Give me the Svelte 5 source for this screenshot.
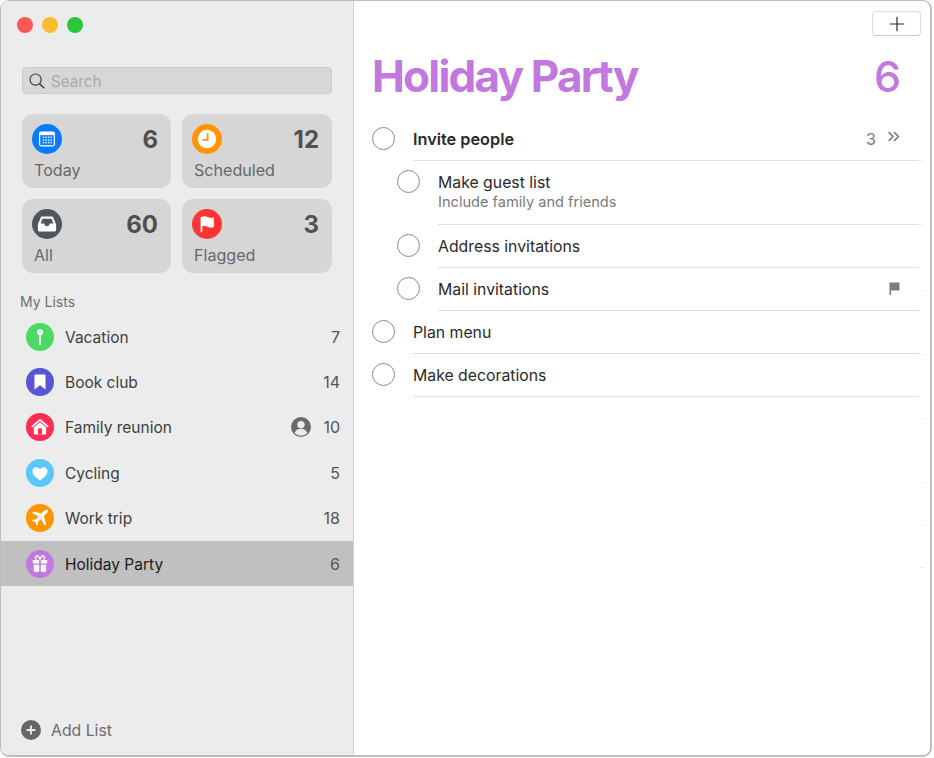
<script lang="ts">
	const smart = [
		{ label: 'Today', count: 6, color: '#0a7aff', icon: 'today' },
		{ label: 'Scheduled', count: 12, color: '#ff9500', icon: 'clock' },
		{ label: 'All', count: 60, color: '#50565e', icon: 'tray' },
		{ label: 'Flagged', count: 3, color: '#ff3433', icon: 'flag' }
	];

	const lists = [
		{ name: 'Vacation', count: 7, color: '#4cd964', icon: 'pin' },
		{ name: 'Book club', count: 14, color: '#5856d6', icon: 'bookmark' },
		{ name: 'Family reunion', count: 10, color: '#ff2d55', icon: 'house', shared: true },
		{ name: 'Cycling', count: 5, color: '#5ac8fa', icon: 'heart' },
		{ name: 'Work trip', count: 18, color: '#ff9500', icon: 'plane' },
		{ name: 'Holiday Party', count: 6, color: '#c278de', icon: 'gift', selected: true }
	];

	const todos = [
		{ title: 'Invite people', bold: true, subtasks: 3 },
		{ title: 'Make guest list', note: 'Include family and friends', child: true },
		{ title: 'Address invitations', child: true },
		{ title: 'Mail invitations', child: true, flagged: true },
		{ title: 'Plan menu' },
		{ title: 'Make decorations' }
	];

	// faint marks along the right edge of the list
	const ticks = [160, 224, 289, 353, 417, 481, 524, 566];
</script>

{#snippet glyph(name: string)}
	<svg viewBox="0 0 28 28" class="glyph" aria-hidden="true">
		{#if name === 'today'}
			<rect x="6.5" y="7" width="15" height="14" rx="2" fill="#fff" />
			<rect x="7.7" y="10.4" width="12.6" height="9.4" fill="#0a7aff" />
			<g fill="#cfe4ff">
				{#each [0, 1, 2] as r}
					{#each [0, 1, 2, 3] as c}
						<rect x={10 + c * 2.4} y={11.6 + r * 2.5} width="1.5" height="1.5" />
					{/each}
				{/each}
			</g>
		{:else if name === 'clock'}
			<circle cx="14" cy="14" r="8.6" fill="#fff" />
			<path d="M14.6 8.6v6.2H9.8" fill="none" stroke="#ff9500" stroke-width="1.7" />
		{:else if name === 'tray'}
			<path d="M8.6 7h10.8l3.1 7.2v5.3a1.5 1.5 0 0 1-1.5 1.5H7a1.5 1.5 0 0 1-1.5-1.5v-5.3z" fill="#fff" />
			<path d="M8 13.6l1.8-4.6h8.4l1.8 4.6h-3.4c-.4 1.6-1.3 2.4-2.6 2.4s-2.2-.8-2.6-2.4z" fill="#50565e" />
		{:else if name === 'flag'}
			<path d="M8 7.6c3-1.4 5.4-.7 7 0s3.200 .9 5.400 .1v9.100c-2.200 .8-3.900 .6-5.400-.1s-3.800-1.200-5.400-.4v5.300H8z" fill="#fff" />
		{:else if name === 'pin'}
			<circle cx="14" cy="9.300" r="3" fill="#fff" />
			<circle cx="14" cy="8.800" r=".8" fill="#4cd964" />
			<rect x="13.100" y="11" width="1.800" height="11" rx=".9" fill="#fff" />
		{:else if name === 'bookmark'}
			<path d="M9.300 6.500h9.400a.8 .8 0 0 1 .8 .8v14.200L14 17.200l-5.500 4.300V7.300a.8 .8 0 0 1 .8-.8z" fill="#fff" />
		{:else if name === 'house'}
			<path d="M14 5.800l8.800 7.400-1 1.200L14 7.900l-7.800 6.500-1-1.200z" fill="#fff" />
			<path d="M7.800 14.300L14 9.200l6.200 5.100v6.200a1 1 0 0 1-1 1H8.800a1 1 0 0 1-1-1z" fill="#fff" />
			<rect x="12" y="15.400" width="4" height="6" fill="#ff2d55" />
		{:else if name === 'heart'}
			<path d="M14 21.500C9.500 18.300 6.500 15.500 6.500 12.300c0-2.400 1.800-4 3.800-4 1.600 0 2.900 .8 3.700 2.200.8-1.400 2.100-2.200 3.700-2.200 2 0 3.800 1.600 3.800 4 0 3.200-3 6-7.500 9.200z" fill="#fff" />
		{:else if name === 'plane'}
			<path d="M21.800 6.200c-.9-.9-2.300-.6-3.300 .4l-3 3-8.200-2.200-1.400 1.400 6.700 3.700-3.200 3.300-2.500-.4-1.100 1.100 3.400 1.800 1.800 3.400 1.100-1.100-.4-2.500 3.300-3.200 3.700 6.700 1.400-1.400-2.200-8.200 3-3c1-1 1.300-2.400 .9-3z" fill="#fff" />
		{:else if name === 'gift'}
			<path d="M10.600 9.600c-1.800-.9-1.600-3.400 .2-3.600 1.500-.2 2.700 1.500 3.200 3.600.5-2.100 1.700-3.800 3.200-3.600 1.800 .2 2 2.700 .2 3.600" fill="none" stroke="#fff" stroke-width="1.300" />
			<path d="M6.800 10h6.400v3.600H6.800zM14.800 10h6.400v3.600h-6.400zM7.800 14.800h5.400v6.900H9a1.200 1.200 0 0 1-1.200-1.200zM14.800 14.800h5.400v5.700a1.200 1.200 0 0 1-1.200 1.200h-4.200z" fill="#fff" />
		{/if}
	</svg>
{/snippet}

<div class="window">
	<aside class="sidebar">
		<div class="traffic">
			<span class="close"></span>
			<span class="min"></span>
			<span class="max"></span>
		</div>

		<div class="search">
			<svg viewBox="0 0 18 18" width="18" height="18" aria-hidden="true">
				<circle cx="7.600" cy="7.600" r="5.600" fill="none" stroke="#3c3c3c" stroke-width="1.200" />
				<path d="M11.700 11.700l4.500 4.500" stroke="#3c3c3c" stroke-width="1.500" />
			</svg>
			<span>Search</span>
		</div>

		<div class="smart">
			{#each smart as s}
				<div class="card">
					<div class="card-top">
						<span class="dot" style:background={s.color}>{@render glyph(s.icon)}</span>
						<span class="card-count">{s.count}</span>
					</div>
					<div class="card-label">{s.label}</div>
				</div>
			{/each}
		</div>

		<h2>My Lists</h2>
		<ul class="lists">
			{#each lists as l}
				<li class:selected={l.selected}>
					<span class="dot small" style:background={l.color}>{@render glyph(l.icon)}</span>
					<span class="name">{l.name}</span>
					{#if l.shared}
						<svg class="shared" viewBox="0 0 20 20" aria-hidden="true">
							<circle cx="10" cy="10" r="10" fill="#6a6a6a" />
							<circle cx="10" cy="7.600" r="3.700" fill="#ececec" />
							<path d="M3.600 16c1-2.900 3.500-4.300 6.400-4.300s5.400 1.400 6.400 4.300a9 9 0 0 1-12.800 0z" fill="#ececec" />
						</svg>
					{/if}
					<span class="count">{l.count}</span>
				</li>
			{/each}
		</ul>

		<div class="add-list">
			<svg viewBox="0 0 20 20" width="20" height="20" aria-hidden="true">
				<circle cx="10" cy="10" r="10" fill="#666" />
				<path d="M10 5.500v9M5.500 10h9" stroke="#ececec" stroke-width="1.800" />
			</svg>
			<span>Add List</span>
		</div>
	</aside>

	<main class="content">
		<div class="toolbar">
			<button class="add" aria-label="Add reminder">
				<svg viewBox="0 0 16 16" width="16" height="16" aria-hidden="true">
					<path d="M8 .8v14.400M.8 8h14.400" stroke="#2a2a2a" stroke-width="1.200" />
				</svg>
			</button>
		</div>

		<header class="heading">
			<h1>Holiday Party</h1>
			<span class="total">6</span>
		</header>

		<div class="todos">
			{#each todos as t}
				<div class="todo" class:child={t.child}>
					<span class="check"></span>
					<div class="body">
						<div class="text">
							<div class="title" class:bold={t.bold}>{t.title}</div>
							{#if t.note}<div class="note">{t.note}</div>{/if}
						</div>
						{#if t.subtasks}
							<span class="sub">{t.subtasks}</span>
							<svg class="chev" viewBox="0 0 12 10" aria-hidden="true">
								<path d="M1.500 1l4 4-4 4M6.500 1l4 4-4 4" fill="none" stroke="#7c7c7c" stroke-width="1.500" />
							</svg>
						{/if}
						{#if t.flagged}
							<svg class="flag" viewBox="0 0 11 13" aria-hidden="true">
								<path d="M.5 .5h10v8H2v4.500H.5z" fill="#7d7d7d" />
							</svg>
						{/if}
					</div>
				</div>
			{/each}
		</div>

		{#each ticks as y}
			<span class="tick" style:top="{y}px"></span>
		{/each}
	</main>
</div>

<style>
	:global(body) {
		background: #fff;
	}
	.window {
		box-sizing: border-box;
		display: flex;
		width: 932px;
		height: 757px;
		border: 1px solid #bdbdbd;
		border-bottom-width: 2px;
		border-right-width: 2px;
		border-radius: 9px;
		overflow: hidden;
		font-family: Inter, 'Liberation Sans', sans-serif;
		background: #fff;
	}
	.sidebar {
		box-sizing: border-box;
		display: flex;
		flex-direction: column;
		width: 353px;
		flex: none;
		background: #ececec;
		border-right: 1px solid #d4d4d4;
	}
	.traffic {
		display: flex;
		gap: 9px;
		padding: 16px 0 0 16px;
	}
	.traffic span {
		width: 16px;
		height: 16px;
		border-radius: 50%;
	}
	.close {
		background: #fc5753;
	}
	.min {
		background: #fdbc2e;
	}
	.max {
		background: #2ac73e;
	}
	.search {
		box-sizing: border-box;
		display: flex;
		align-items: center;
		gap: 5px;
		height: 27px;
		margin: 34px 21px 0;
		padding: 0 5px;
		background: #d7d7d7;
		border: 1px solid #cbcbcb;
		border-radius: 4px;
		font-size: 15.200px;
		color: #a9a9a9;
	}
	.search span {
		padding-top: 1px;
	}
	.smart {
		display: grid;
		grid-template-columns: 149px 150px;
		grid-auto-rows: 74px;
		gap: 11px;
		margin: 20px 0 0 21px;
	}
	.card {
		box-sizing: border-box;
		padding: 10px 13px 0 9.500px;
		background: #d6d6d6;
		border-radius: 11px;
	}
	.card-top {
		display: flex;
		align-items: center;
		justify-content: space-between;
	}
	.dot {
		display: flex;
		flex: none;
		width: 30px;
		height: 30px;
		border-radius: 50%;
	}
	.dot.small {
		width: 28px;
		height: 28px;
	}
	.glyph {
		width: 100%;
		height: 100%;
	}
	.card-count {
		font-size: 24px;
		font-weight: 700;
		color: #505050;
	}
	.card-label {
		margin: 6px 0 0 2.500px;
		font-size: 16.100px;
		line-height: 20px;
		color: #686868;
	}
	h2 {
		margin: 20px 0 0 19px;
		font-size: 14px;
		line-height: 17px;
		font-weight: 400;
		color: #6e6e6e;
	}
	.lists {
		margin: 4px 0 0;
		padding: 0;
		list-style: none;
	}
	.lists li {
		display: flex;
		align-items: center;
		height: 45.400px;
		padding: 0 13px 0 25px;
		font-size: 15.500px;
		color: #404040;
	}
	.lists li.selected {
		background: #c0c0c0;
		color: #1a1a1a;
	}
	.name {
		margin-left: 11px;
		padding-top: 1px;
		flex: 1;
	}
	.shared {
		width: 20px;
		height: 20px;
		margin-right: 12px;
	}
	.count {
		font-size: 16px;
		color: #555;
	}
	.add-list {
		display: flex;
		align-items: center;
		gap: 10px;
		margin: auto 0 15px 20px;
		font-size: 15.800px;
		color: #6c6c6c;
	}
	.content {
		position: relative;
		flex: 1;
		min-width: 0;
		padding-left: 18px;
	}
	.toolbar {
		display: flex;
		justify-content: flex-end;
		padding: 10px 9px 0 0;
	}
	.add {
		display: flex;
		align-items: center;
		justify-content: center;
		width: 49px;
		height: 25px;
		padding: 0;
		background: #fff;
		border: 1px solid #dcdcdc;
		border-bottom-color: #c8c8c8;
		border-radius: 4px;
	}
	.heading {
		display: flex;
		align-items: center;
		justify-content: space-between;
		height: 54px;
		margin-top: 13px;
		padding-right: 29px;
		color: #c278de;
	}
	h1 {
		margin: 0;
		font-size: 44px;
		font-weight: 700;
		letter-spacing: -1.800px;
	}
	.total {
		font-size: 43px;
		font-weight: 500;
	}
	.todos {
		margin-top: 15px;
		padding-right: 11px;
	}
	.todo {
		display: flex;
		align-items: flex-start;
	}
	.todo.child {
		padding-left: 25px;
	}
	.check {
		box-sizing: border-box;
		flex: none;
		width: 23px;
		height: 23px;
		margin: 9px 7px 0 0;
		border: 1.300px solid #8a8a8a;
		border-radius: 50%;
	}
	.body {
		display: flex;
		flex: 1;
		align-items: flex-start;
		padding: 10px 19px 10px 0;
		border-bottom: 1px solid #dedede;
		min-height: 22px;
		margin-left: 11px;
	}
	.text {
		flex: 1;
	}
	.title {
		padding-top: 1px;
		margin-bottom: -1px;
		font-size: 15.800px;
		line-height: 22px;
		color: #2a2a2a;
	}
	.title.bold {
		padding-top: 0;
		margin-bottom: 0;
		font-size: 16.300px;
		font-weight: 600;
	}
	.note {
		margin-top: -2px;
		padding-bottom: 2px;
		font-size: 14.600px;
		line-height: 20px;
		color: #7a7a7a;
	}
	.sub {
		font-size: 16px;
		line-height: 22px;
		color: #7c7c7c;
	}
	.chev {
		width: 13px;
		height: 11px;
		margin: 3px 0 0 11px;
	}
	.flag {
		width: 11px;
		height: 13px;
		margin-top: 4px;
	}
	.tick {
		position: absolute;
		left: 567px;
		width: 3px;
		height: 1px;
		background: #e6e6e6;
	}
</style>
